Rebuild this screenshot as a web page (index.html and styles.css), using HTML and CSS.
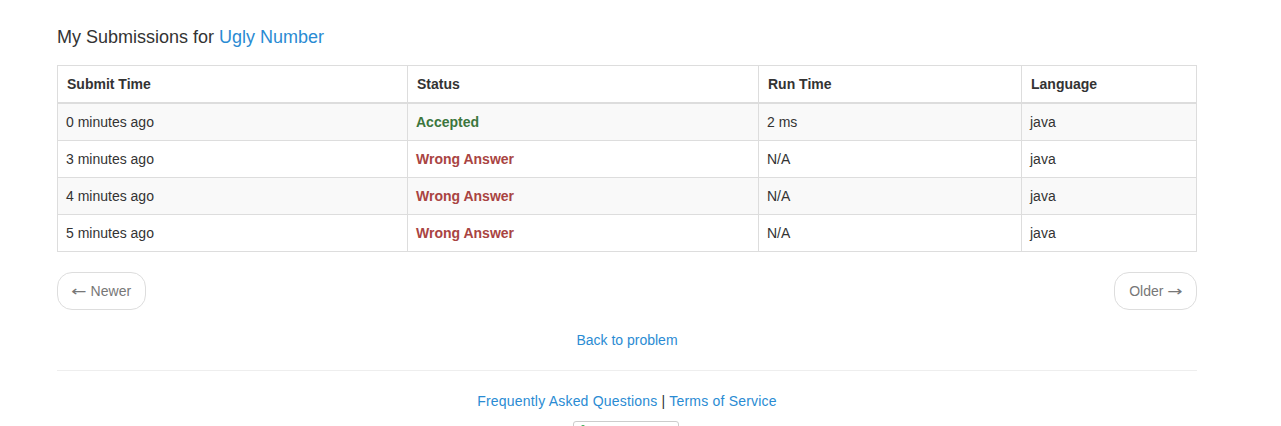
FILE: index.html
```html
<!DOCTYPE html>
<html>
<head>
<meta charset="utf-8">
<link rel="stylesheet" href="styles.css">
</head>
<body>
<div class="container">
  <h3 class="title">My Submissions for <a href="#">Ugly Number</a></h3>
  <table class="subs">
    <thead>
      <tr><th class="c1">Submit Time</th><th class="c2">Status</th><th class="c3">Run Time</th><th class="c4">Language</th></tr>
    </thead>
    <tbody>
      <tr><td>0 minutes ago</td><td><a class="ok" href="#">Accepted</a></td><td>2 ms</td><td>java</td></tr>
      <tr><td>3 minutes ago</td><td><a class="bad" href="#">Wrong Answer</a></td><td>N/A</td><td>java</td></tr>
      <tr><td>4 minutes ago</td><td><a class="bad" href="#">Wrong Answer</a></td><td>N/A</td><td>java</td></tr>
      <tr><td>5 minutes ago</td><td><a class="bad" href="#">Wrong Answer</a></td><td>N/A</td><td>java</td></tr>
    </tbody>
  </table>
  <div class="pager">
    <a class="pg" href="#"><span class="arr arr-l">&larr;</span> Newer</a>
    <a class="pg" href="#">Older <span class="arr arr-r">&rarr;</span></a>
  </div>
  <div class="back"><a href="#">Back to problem</a></div>
  <hr class="sep">
  <div class="footer"><a href="#">Frequently Asked Questions</a> | <a href="#">Terms of Service</a></div>
  <div class="widget"><span class="dot"></span></div>
</div>
</body>
</html>
```
FILE: styles.css
```css
html, body { margin: 0; padding: 0; background: #fff; }
body {
  font-family: "Liberation Sans", Arial, sans-serif;
  font-size: 14px;
  line-height: 20px;
  color: #333;
  overflow: hidden;
}
a { color: #2a8bd3; text-decoration: none; }
.container {
  width: 1140px;
  margin: 0;
  padding-left: 57px;
}
.title {
  margin: 27px 0 0;
  font-size: 18px;
  font-weight: normal;
  line-height: 20px;
  height: 20px;
  color: #333;
}
.subs {
  margin-top: 18px;
  width: 1140px;
  border-collapse: collapse;
  border: 1px solid #ddd;
}
.subs th, .subs td {
  border: 1px solid #ddd;
  padding: 8px;
  text-align: left;
  line-height: 20px;
  vertical-align: top;
}
.subs th { font-weight: bold; border-bottom: 2px solid #ddd; padding-left: 9px; }
.subs .c1 { width: 332px; }
.subs .c2 { width: 333px; }
.subs .c3 { width: 245px; }
.subs tbody tr:nth-child(odd) td { background: #f9f9f9; }
.subs a { font-weight: bold; }
.ok { color: #3c763d; }
.bad { color: #a94442; }
.pager {
  margin-top: 20px;
  display: flex;
  justify-content: space-between;
}
.pg {
  display: inline-block;
  padding: 8px 14px;
  border: 1px solid #ddd;
  border-radius: 15px;
  color: #777;
  background: #fff;
}
.arr {
  font-family: "DejaVu Sans", sans-serif;
  font-size: 14px;
  display: inline-block;
  transform: scaleX(1.3);
}
.arr-l { margin-left: 1px; margin-right: 2px; }
.arr-r { margin-left: 2px; margin-right: 1px; }
.back {
  margin-top: 20px;
  text-align: center;
}
.sep {
  margin: 20px 0 0;
  border: 0;
  border-top: 1px solid #eee;
}
.footer {
  margin-top: 20px;
  text-align: center;
  color: #333;
  letter-spacing: 0.2px;
}
.widget {
  margin: 10px auto 0;
  position: relative;
  left: -1px;
  width: 104px;
  height: 20px;
  border: 1px solid #ccc;
  border-radius: 3px;
}
.dot {
  position: absolute;
  left: 7px;
  top: 3px;
  width: 4px;
  height: 4px;
  border-radius: 50%;
  background: #2aa84a;
}
```
